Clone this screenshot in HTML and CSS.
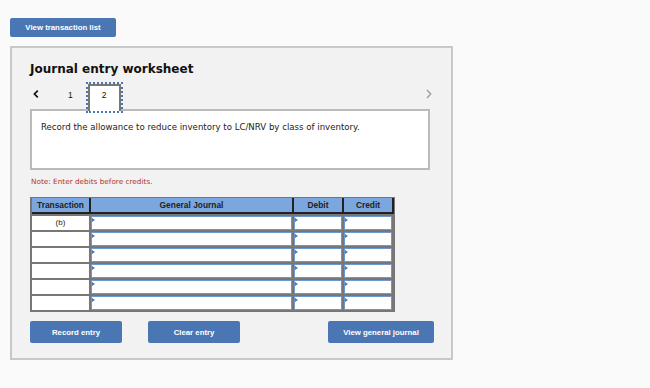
FILE: index.html
```html
<!DOCTYPE html>
<html lang="en">
<head>
  <meta charset="UTF-8" />
  <title>Journal entry worksheet</title>
  <link rel="stylesheet" href="styles.css">
</head>
<body>
  <button class="btn btn-list">View transaction list</button>

  <div class="panel">
    <h2 class="title">Journal entry worksheet</h2>

    <div class="tabs">
      <svg class="arrow prev" width="6" height="8" viewBox="0 0 6 8">
        <path d="M4.8 0.6 L1.4 4 L4.8 7.4" fill="none" stroke="#111" stroke-width="1.7"/>
      </svg>
      <span class="tab first">1</span>
      <span class="tab active">2</span>
      <svg class="arrow next" width="6" height="10" viewBox="0 0 6 10">
        <path d="M1 1 L4.8 5 L1 9" fill="none" stroke="#999" stroke-width="1.2"/>
      </svg>
    </div>

    <div class="prompt">Record the allowance to reduce inventory to LC/NRV by class of inventory.</div>

    <p class="note">Note: Enter debits before credits.</p>

    <div class="jtable">
      <div class="jhead">
        <span>Transaction</span>
        <span>General Journal</span>
        <span>Debit</span>
        <span>Credit</span>
      </div>
      <div class="jrow">
        <span class="tcell">(b)</span>
        <span class="field"></span>
        <span class="field"></span>
        <span class="field"></span>
      </div>
      <div class="jrow">
        <span class="tcell"></span>
        <span class="field"></span>
        <span class="field"></span>
        <span class="field"></span>
      </div>
      <div class="jrow">
        <span class="tcell"></span>
        <span class="field"></span>
        <span class="field"></span>
        <span class="field"></span>
      </div>
      <div class="jrow">
        <span class="tcell"></span>
        <span class="field"></span>
        <span class="field"></span>
        <span class="field"></span>
      </div>
      <div class="jrow">
        <span class="tcell"></span>
        <span class="field"></span>
        <span class="field"></span>
        <span class="field"></span>
      </div>
      <div class="jrow">
        <span class="tcell"></span>
        <span class="field"></span>
        <span class="field"></span>
        <span class="field"></span>
      </div>
    </div>

    <div class="actions">
      <button class="btn btn-record">Record entry</button>
      <button class="btn btn-clear">Clear entry</button>
      <button class="btn btn-view">View general journal</button>
    </div>
  </div>
</body>
</html>
```

FILE: styles.css
```css
body {
  margin: 0;
  padding: 18px 0 0 10px;
  background: #fafafa;
  font-family: 'Liberation Sans', Arial, sans-serif;
}

.btn {
  display: block;
  height: 22px;
  padding: 0;
  border: none;
  border-radius: 2px;
  background: #4a77b4;
  color: #fff;
  font-family: 'Liberation Sans', Arial, sans-serif;
  font-size: 7.8px;
  font-weight: bold;
  cursor: pointer;
}

.btn-list {
  width: 106px;
  height: 19px;
}

.panel {
  box-sizing: border-box;
  width: 443px;
  margin-top: 9px;
  padding: 14px 0 15px 18px;
  background: #f2f2f2;
  border: 2px solid #c8c8c8;
}

.title {
  margin: 0;
  font-family: 'DejaVu Sans', Verdana, sans-serif;
  font-size: 12px;
  line-height: 14px;
  font-weight: bold;
  color: #111;
}

.tabs {
  display: flex;
  align-items: flex-start;
  width: 402px;
  height: 30px;
  margin-top: 6px;
  margin-bottom: -3px;
}

.prev {
  margin-left: 3px;
  margin-top: 8px;
}

.next {
  margin-left: auto;
  margin-top: 7px;
}

.tab {
  font-size: 8.5px;
  line-height: 10px;
  color: #111;
}

.tab.first {
  margin-left: 29px;
  margin-top: 8px;
}

.tab.active {
  position: relative;
  z-index: 1;
  box-sizing: border-box;
  width: 33px;
  height: 27px;
  margin-left: 15px;
  margin-top: 2px;
  padding-top: 4px;
  text-align: center;
  background: #fff;
  border: 2px solid #777;
  border-bottom: none;
  outline: 2px dotted #4a77b4;
}

.prompt {
  width: 400px;
  height: 61px;
  box-sizing: border-box;
  padding: 11px 9px;
  background: #fff;
  border: 2px solid #bbb;
  font-family: 'DejaVu Sans', Verdana, sans-serif;
  font-size: 8.6px;
  color: #222;
}

.note {
  margin: 7px 0 11px 1px;
  font-family: 'DejaVu Sans', Verdana, sans-serif;
  font-size: 7.3px;
  color: #b2342c;
}

.jtable {
  width: fit-content;
  background: #777;
  padding: 1px 1px 2px 2px;
}

.jhead,
.jrow {
  display: grid;
  grid-template-columns: 57px 201px 48px 48px;
  column-gap: 2px;
}

.jhead {
  background: #222;
  padding: 0 2px 2px 0;
}

.jhead span {
  height: 14px;
  line-height: 14px;
  background: #7ba7de;
  text-align: center;
  font-size: 8.4px;
  font-weight: bold;
  color: #222;
}

.jrow {
  margin-top: 2px;
  padding-right: 2px;
}

.tcell {
  height: 14px;
  line-height: 13px;
  background: #fff;
  text-align: center;
  font-size: 8px;
  color: #222;
}

.field {
  position: relative;
  height: 14px;
  box-sizing: border-box;
  background: #fff;
  border: 1px solid #6f97cf;
}

.field::before {
  content: '';
  position: absolute;
  top: 1px;
  left: 0;
  border-top: 2px solid transparent;
  border-bottom: 2px solid transparent;
  border-left: 3px solid #4a77b4;
}

.actions {
  display: flex;
  margin-top: 9px;
}

.btn-record,
.btn-clear {
  width: 92px;
}

.btn-clear {
  margin-left: 26px;
}

.btn-view {
  width: 106px;
  margin-left: 88px;
}
```
